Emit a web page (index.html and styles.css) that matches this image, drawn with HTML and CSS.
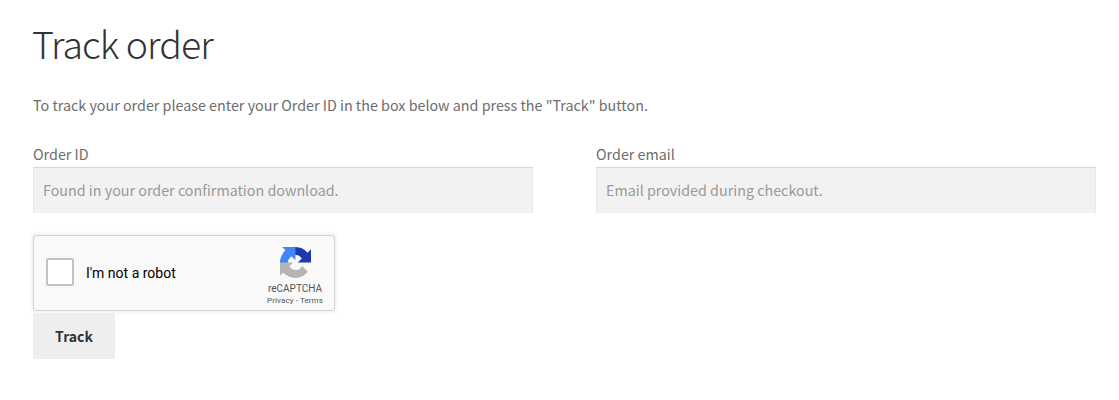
FILE: index.html
```html
<!DOCTYPE html>
<html lang="en">
<head>
    <meta charset="UTF-8">
    <meta name="viewport" content="width=device-width, initial-scale=1.0">
    <title>Track order</title>
    <link rel="stylesheet" href="styles.css">
</head>
<body>
    <h1>Track order</h1>
    <form id="track-form" class="track-form">
        <p class="intro">To track your order please enter your Order ID in the box below and press the "Track" button.</p>

        <div class="form-row">
            <div class="field">
                <label for="orderid">Order ID</label>
                <input type="text" id="orderid" placeholder="Found in your order confirmation download.">
            </div>
            <div class="field">
                <label for="order-email">Order email</label>
                <input type="text" id="order-email" placeholder="Email provided during checkout.">
            </div>
        </div>

        <div class="captcha">
            <span class="captcha-checkbox" role="checkbox" aria-checked="false" tabindex="0"></span>
            <span class="captcha-label">I'm not a robot</span>
            <div class="captcha-brand">
                <svg class="captcha-logo" viewBox="0 0 64 64" aria-hidden="true">
                    <path fill="#1c3aa9" d="M64 31.955l-.033-1.37V4.687l-7.16 7.16C50.948 4.674 42.033.093 32.05.093c-10.4 0-19.622 4.96-25.458 12.64l11.736 11.86a15.55 15.55 0 0 1 4.754-5.334c2.05-1.6 4.952-2.906 8.968-2.906.485 0 .86.057 1.135.163 4.976.393 9.288 3.14 11.828 7.124l-8.307 8.307L64 31.953"/>
                    <path fill="#4285f4" d="M31.862.094l-1.37.033H4.594l7.16 7.16C4.58 13.147 0 22.06 0 32.046c0 10.4 4.96 19.622 12.64 25.458L24.5 45.768a15.55 15.55 0 0 1-5.334-4.754c-1.6-2.05-2.906-4.952-2.906-8.968 0-.485.057-.86.163-1.135.393-4.976 3.14-9.288 7.124-11.828l8.307 8.307L31.86.095"/>
                    <path fill="#b5b5b5" d="M.001 32.045l.033 1.37v25.898l7.16-7.16c5.86 7.173 14.774 11.754 24.76 11.754 10.4 0 19.622-4.96 25.458-12.64l-11.736-11.86a15.55 15.55 0 0 1-4.754 5.334c-2.05 1.6-4.952 2.906-8.968 2.906-.485 0-.86-.057-1.135-.163-4.976-.393-9.288-3.14-11.828-7.124l8.307-8.307c-10.522.04-22.4.066-27.295-.005"/>
                </svg>
                <div class="captcha-name">reCAPTCHA</div>
                <div class="captcha-links"><a href="#">Privacy</a> - <a href="#">Terms</a></div>
            </div>
        </div>

        <button type="submit">Track</button>
    </form>
</body>
</html>
```
FILE: styles.css
```css
* {
    box-sizing: border-box;
}

body {
    margin: 0;
    padding: 18px 23px 0 33px;
    background-color: #fff;
    color: #6d6d6d;
    font-family: "Noto Sans CJK SC", "Noto Sans", sans-serif;
    font-size: 14.32px;
    line-height: 26px;
}

h1 {
    margin: 0 0 24px -1px;
    color: #333;
    font-size: 37.5px;
    font-weight: 300;
    line-height: 50px;
    letter-spacing: -0.95px;
}

.intro {
    margin: 0 0 23px;
}

.form-row {
    display: flex;
    justify-content: space-between;
    margin-bottom: 22px;
}

.field {
    width: 500px;
}

label {
    display: block;
}

input[type="text"] {
    display: block;
    width: 100%;
    height: 46px;
    padding: 0 10px 2px;
    border: 0;
    border-radius: 0;
    background-color: #f2f2f2;
    color: #43454b;
    font: inherit;
    box-shadow: inset 0 1px 1px rgba(0, 0, 0, 0.125), inset 1px 0 1px rgba(0, 0, 0, 0.03), inset -1px 0 1px rgba(0, 0, 0, 0.03);
}

input::placeholder {
    color: #999;
}

.captcha {
    display: flex;
    align-items: center;
    width: 302px;
    height: 76px;
    margin-bottom: 2px;
    padding-left: 12px;
    border: 1px solid #d3d3d3;
    border-radius: 3px;
    background-color: #f9f9f9;
    box-shadow: 0 0 4px 1px rgba(0, 0, 0, 0.08);
    font-family: Roboto, sans-serif;
}

.captcha-checkbox {
    width: 28px;
    height: 28px;
    margin-right: 12px;
    margin-bottom: 2px;
    border: 2px solid #c1c1c1;
    border-radius: 2px;
    background-color: #fff;
}

.captcha-label {
    color: #000;
    font-size: 14px;
    line-height: 17px;
}

.captcha-brand {
    width: 58px;
    margin-left: auto;
    margin-right: 10px;
    padding-top: 7px;
    color: #555;
    text-align: center;
    white-space: nowrap;
}

.captcha-logo {
    display: block;
    width: 31px;
    height: 31px;
    margin: 0 auto 5px;
}

.captcha-name {
    font-size: 10px;
    line-height: 12px;
}

.captcha-links {
    font-size: 8px;
    line-height: 11px;
    letter-spacing: 0.1px;
}

.captcha-links a {
    color: #555;
    text-decoration: none;
}

button {
    display: block;
    width: 82px;
    height: 46px;
    padding: 0;
    border: 0;
    background-color: #eee;
    color: #333;
    font: inherit;
    font-size: 14px;
    font-weight: 600;
    cursor: pointer;
}

button:hover {
    background-color: #d5d5d5;
}
```
